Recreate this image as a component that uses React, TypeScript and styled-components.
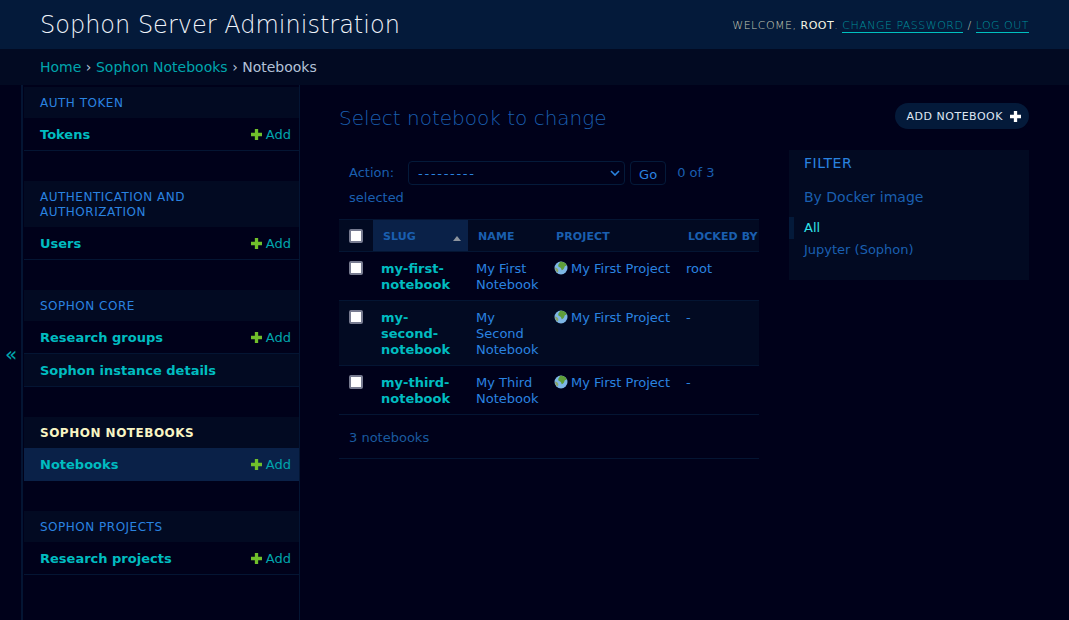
import React from "react"
import styled, { createGlobalStyle } from "styled-components"

const GlobalStyles = createGlobalStyle`
  html, body {
    margin: 0;
    padding: 0;
    height: 100%;
    background: #00011a;
    overflow: hidden;
  }
  body {
    font-family: "DejaVu Sans", "Liberation Sans", sans-serif;
    font-size: 14px;
    color: #1a5fb0;
  }
  a {
    text-decoration: none;
  }
`

const Root = styled.div`
  height: 620px;
  display: flex;
  flex-direction: column;
`

const Header = styled.header`
  height: 49px;
  flex: none;
  display: flex;
  align-items: center;
  justify-content: space-between;
  padding: 0 40px;
  background: #041a3a;
`

const Brand = styled.h1`
  margin: 1px 0 0;
  font-size: 24px;
  font-weight: 200;
  color: #f0f4fa;
`

const UserTools = styled.div`
  padding-top: 3px;
  font-size: 11px;
  font-weight: 200;
  letter-spacing: 0.5px;
  text-transform: uppercase;
  color: #c5c9b8;
  line-height: 14px;
  strong {
    font-weight: 400;
    color: #f6f6e4;
  }
`

const UserLink = styled.a`
  color: #008f9c;
  border-bottom: 1px solid #00c0c0;
`

const Breadcrumbs = styled.div`
  height: 36px;
  flex: none;
  display: flex;
  align-items: center;
  gap: 4.5px;
  padding: 0 40px;
  background: #020a22;
  color: #b4c2d8;
  a {
    color: #00a5ad;
  }
`

const Body = styled.div`
  flex: 1;
  min-height: 0;
  display: flex;
`

const ToggleNav = styled.button`
  width: 22px;
  flex: none;
  border: 0;
  border-right: 1px solid #041533;
  padding: 2px 0 0 1px;
  background: transparent;
  color: #00a5ad;
  font-family: inherit;
  font-size: 20px;
  cursor: pointer;
`

const Sidebar = styled.nav`
  width: 275px;
  flex: none;
  padding: 2px 0 0 1px;
  border-left: 1px solid #041533;
  border-right: 1px solid #041533;
`

const Module = styled.section`
  margin-bottom: 30px;
`

const Caption = styled.div<{ $current?: boolean }>`
  padding: 9px 16px 7px;
  font-size: 12px;
  line-height: 15px;
  letter-spacing: 0.5px;
  text-transform: uppercase;
  background: #020a22;
  color: ${(p) => (p.$current ? "#f8f5c4" : "#2a83e0")};
  font-weight: ${(p) => (p.$current ? 700 : 400)};
`

const ModelRow = styled.div<{ $current?: boolean; $alt?: boolean }>`
  display: flex;
  justify-content: space-between;
  padding: 9px 8px 7px 16px;
  font-size: 13px;
  line-height: 16px;
  border-bottom: 1px solid ${(p) => (p.$current ? "#0a2148" : "#041533")};
  background: ${(p) => (p.$current ? "#0a2148" : p.$alt ? "#020a22" : "transparent")};
`

const ModelName = styled.a`
  font-weight: 700;
  color: #00bcc0;
`

const AddLink = styled.a`
  display: flex;
  align-items: center;
  gap: 4px;
  color: #00a5ad;
  svg {
    margin-top: -2px;
  }
`

const Content = styled.main`
  flex: 1;
  min-width: 0;
  padding: 0 40px 0 39px;
`

const TitleRow = styled.div`
  height: 65px;
  display: flex;
  align-items: center;
  justify-content: space-between;
`

const Title = styled.h2`
  margin: 1px 0 0;
  font-size: 20px;
  font-weight: 200;
  color: #1a5fb0;
`

const AddButton = styled.a`
  display: flex;
  align-items: center;
  gap: 7px;
  height: 26px;
  margin-top: -3px;
  padding: 0 8px 0 12px;
  border-radius: 13px;
  background: #041a3a;
  color: #dfe6f2;
  font-size: 11px;
  letter-spacing: 0.5px;
  text-transform: uppercase;
`

const Columns = styled.div`
  display: flex;
  justify-content: space-between;
  align-items: flex-start;
`

const ChangeList = styled.div`
  width: 420px;
  overflow: hidden;
`

const Actions = styled.div`
  padding: 10px 10px 9px;
  font-size: 13px;
  line-height: 25px;
  color: #1a5fb0;
`

const ActionLabel = styled.label`
  margin-right: 14px;
`

const SelectWrap = styled.span`
  position: relative;
  display: inline-block;
  width: 217px;
  height: 24px;
  margin-top: 1px;
  vertical-align: top;
`

const ActionSelect = styled.select`
  appearance: none;
  display: block;
  box-sizing: border-box;
  width: 100%;
  height: 24px;
  padding: 0 0 0 9px;
  border: 1px solid #041a3a;
  border-radius: 4px;
  background: #00011a;
  color: #2a83e0;
  font-family: inherit;
  font-size: 13px;
  letter-spacing: 1.7px;
`

const Chevron = styled.svg`
  position: absolute;
  right: 5px;
  top: 9px;
  pointer-events: none;
`

const GoButton = styled.button`
  height: 24px;
  margin: 1px 11px 0 5px;
  padding: 2px 8px 0;
  border: 1px solid #041a3a;
  border-radius: 4px;
  background: transparent;
  color: #2a83e0;
  font-family: inherit;
  font-size: 13px;
  vertical-align: top;
`

const Counter = styled.span`
  color: #1a5fb0;
`

const Table = styled.table`
  width: 540px;
  table-layout: fixed;
  border-collapse: collapse;
  font-size: 13px;
  line-height: 16px;
`

const Th = styled.th<{ $sorted?: boolean; $width: number }>`
  position: relative;
  width: ${(p) => p.$width}px;
  height: 32px;
  padding: 2px 10px 0;
  box-sizing: border-box;
  text-align: left;
  font-size: 11px;
  font-weight: 700;
  letter-spacing: 0.1px;
  color: #1a5fb0;
  text-transform: uppercase;
  white-space: nowrap;
  background: ${(p) => (p.$sorted ? "#0a2148" : "#020a22")};
  border-top: 1px solid #041533;
  border-bottom: 1px solid #041533;
`

const SortMark = styled.span`
  position: absolute;
  right: 7px;
  top: 16px;
  width: 0;
  height: 0;
  border-left: 4px solid transparent;
  border-right: 4px solid transparent;
  border-bottom: 5px solid #8d949e;
`

const Tr = styled.tr<{ $alt?: boolean }>`
  background: ${(p) => (p.$alt ? "#020a22" : "transparent")};
  border-bottom: 1px solid #041533;
`

const Td = styled.td`
  padding: 9px 8px 7px;
  vertical-align: top;
  color: #2a83e0;
`

const SlugLink = styled.a`
  font-weight: 700;
  color: #00bcc0;
`

const Box = styled.input`
  appearance: none;
  display: block;
  box-sizing: border-box;
  margin: 0 0 0 2px;
  width: 14px;
  height: 14px;
  border: 2px solid #777b90;
  border-radius: 2px;
  background: #ffffff;
  th & {
    margin: -2px 0 0;
  }
`

const Paginator = styled.div`
  height: 43px;
  box-sizing: content-box;
  display: flex;
  align-items: center;
  padding: 0 0 0 10px;
  font-size: 13px;
  line-height: 18px;
  color: #1a5a9f;
  border-bottom: 1px solid #041533;
  span {
    margin-top: 2px;
  }
`

const Filter = styled.aside`
  width: 240px;
  height: 130px;
  background: #020a22;
`

const FilterTitle = styled.div`
  padding: 5px 15px 0;
  font-size: 14px;
  line-height: 17px;
  letter-spacing: 0.5px;
  color: #2a83e0;
`

const FilterGroup = styled.div`
  padding: 17px 15px 11px;
  font-size: 14px;
  line-height: 17px;
  color: #1a5fb0;
`

const FilterList = styled.ul`
  margin: 0;
  padding: 0;
  list-style: none;
  font-size: 13px;
  line-height: 16px;
`

const FilterItem = styled.li<{ $selected?: boolean }>`
  padding: 3px 15px 3px ${(p) => (p.$selected ? 10 : 15)}px;
  border-left: ${(p) => (p.$selected ? "5px solid #041a3a" : "0")};
  color: ${(p) => (p.$selected ? "#2fe3e8" : "#1a5fb0")};
`

const Globe = styled.svg`
  vertical-align: -2px;
  margin-right: 3px;
`

const PlusIcon: React.FC<{ color: string; size: number }> = ({ color, size }) => (
  <svg width={size} height={size} viewBox="0 0 10 10" aria-hidden="true">
    <path d="M3.5 0h3v3.500h3.500v3H6.500V10h-3V6.500H0v-3h3.500z" fill={color} />
  </svg>
)

const GlobeIcon: React.FC = () => (
  <Globe width="14" height="14" viewBox="0 0 14 14" aria-hidden="true">
    <circle cx="7" cy="7" r="6.500" fill="#7db6e6" />
    <path
      d="M6 .8c2.200-.5 4.500.2 5.900 2 .6.900.7 1.600.4 2.400-.9-.5-1.600-.2-1.800.8-.3 1.400-1.200 2.900-2.700 3.300-.6-1-.5-2-1.300-2.500-1-.6-2.200-.8-2.300-2C4.100 3.300 5.500 2.500 6 .8z"
      fill="#5f9e3a"
    />
    <path d="M1 6.500c1.300.1 2.500.9 3.100 2 .5 1 .1 2-.4 3.100C2.100 10.600 1.100 8.600 1 6.500z" fill="#8aa56a" />
  </Globe>
)

const modules = [
  { name: "Auth Token", models: [{ name: "Tokens", add: true }] },
  { name: "Authentication and Authorization", models: [{ name: "Users", add: true }] },
  {
    name: "Sophon Core",
    models: [
      { name: "Research groups", add: true },
      { name: "Sophon instance details", add: false },
    ],
  },
  { name: "Sophon Notebooks", current: true, models: [{ name: "Notebooks", add: true, current: true }] },
  { name: "Sophon Projects", models: [{ name: "Research projects", add: true }] },
]

const rows = [
  { slug: "my-first-notebook", name: "My First Notebook", locked: "root" },
  { slug: "my-second-notebook", name: "My Second Notebook", locked: "-" },
  { slug: "my-third-notebook", name: "My Third Notebook", locked: "-" },
]

export default function App() {
  return (
    <Root>
      <GlobalStyles />
      <Header>
        <Brand>Sophon Server Administration</Brand>
        <UserTools>
          Welcome, <strong>root</strong>. <UserLink href="#">Change password</UserLink> /{" "}
          <UserLink href="#">Log out</UserLink>
        </UserTools>
      </Header>
      <Breadcrumbs>
        <a href="#">Home</a> › <a href="#">Sophon Notebooks</a> › Notebooks
      </Breadcrumbs>
      <Body>
        <ToggleNav>«</ToggleNav>
        <Sidebar>
          {modules.map((m) => (
            <Module key={m.name}>
              <Caption $current={m.current}>{m.name}</Caption>
              {m.models.map((model) => (
                <ModelRow key={model.name} $current={"current" in model} $alt={!model.add}>
                  <ModelName href="#">{model.name}</ModelName>
                  {model.add && (
                    <AddLink href="#">
                      <PlusIcon color="#70bf2b" size={11} />
                      Add
                    </AddLink>
                  )}
                </ModelRow>
              ))}
            </Module>
          ))}
        </Sidebar>
        <Content>
          <TitleRow>
            <Title>Select notebook to change</Title>
            <AddButton href="#">
              Add notebook
              <PlusIcon color="#ffffff" size={11} />
            </AddButton>
          </TitleRow>
          <Columns>
            <ChangeList>
              <Actions>
                <ActionLabel>Action:</ActionLabel>
                <SelectWrap>
                  <ActionSelect defaultValue="">
                    <option value="">---------</option>
                  </ActionSelect>
                  <Chevron width="10" height="6" viewBox="0 0 10 6" aria-hidden="true">
                    <path d="M1 1l4 4 4-4" fill="none" stroke="#2a83e0" strokeWidth="1.600" />
                  </Chevron>
                </SelectWrap>
                <GoButton>Go</GoButton>
                <Counter>0 of 3 selected</Counter>
              </Actions>
              <Table>
                <thead>
                  <tr>
                    <Th $width={34}>
                      <Box type="checkbox" />
                    </Th>
                    <Th $width={95} $sorted>
                      Slug
                      <SortMark />
                    </Th>
                    <Th $width={78}>Name</Th>
                    <Th $width={132}>Project</Th>
                    <Th $width={201}>Locked by</Th>
                  </tr>
                </thead>
                <tbody>
                  {rows.map((r, i) => (
                    <Tr key={r.slug} $alt={i === 1}>
                      <Td>
                        <Box type="checkbox" />
                      </Td>
                      <Td>
                        <SlugLink href="#">{r.slug}</SlugLink>
                      </Td>
                      <Td>{r.name}</Td>
                      <Td>
                        <GlobeIcon />
                        My First Project
                      </Td>
                      <Td>{r.locked}</Td>
                    </Tr>
                  ))}
                </tbody>
              </Table>
              <Paginator>
                <span>3 notebooks</span>
              </Paginator>
            </ChangeList>
            <Filter>
              <FilterTitle>FILTER</FilterTitle>
              <FilterGroup>By Docker image</FilterGroup>
              <FilterList>
                <FilterItem $selected>All</FilterItem>
                <FilterItem>Jupyter (Sophon)</FilterItem>
              </FilterList>
            </Filter>
          </Columns>
        </Content>
      </Body>
    </Root>
  )
}
